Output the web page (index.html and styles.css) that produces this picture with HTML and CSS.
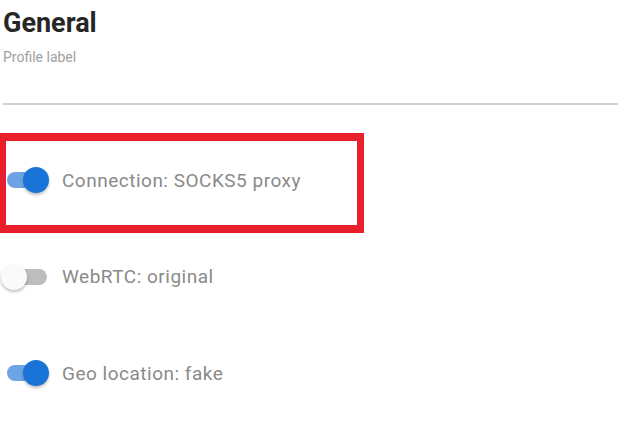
FILE: index.html
```html
<!DOCTYPE html>
<html lang="en">
<head>
  <meta charset="UTF-8" />
  <title>General</title>
  <link rel="stylesheet" href="styles.css">
</head>
<body>
  <div class="header">
    <h1>General</h1>
    <div class="field">
      <label>Profile label</label>
    </div>
  </div>

  <div class="options">
    <div class="option marked">
      <span class="switch on"><span class="track"></span><span class="thumb"></span></span>
      <span class="caption">Connection: SOCKS5 proxy</span>
    </div>
    <div class="option">
      <span class="switch"><span class="track"></span><span class="thumb"></span></span>
      <span class="caption">WebRTC: original</span>
    </div>
    <div class="option">
      <span class="switch on"><span class="track"></span><span class="thumb"></span></span>
      <span class="caption">Geo location: fake</span>
    </div>
  </div>
</body>
</html>
```

FILE: styles.css
```css
*, *::after {
  box-sizing: border-box;
}
body {
  margin: 0;
  font-family: Roboto, 'Noto Sans', sans-serif;
  background: #fff;
  overflow: hidden;
}
.header {
  padding-left: 3px;
}
h1 {
  margin: 0;
  padding-top: 7px;
  font-size: 27px;
  line-height: 32px;
  font-weight: 700;
  color: #262626;
}
.field {
  height: 66px;
  padding-top: 10px;
  border-bottom: 2px solid #d2d2d2;
}
.field label {
  display: block;
  font-size: 14px;
  line-height: 16px;
  color: #a0a0a0;
}
.options {
  margin-top: 27px;
  display: flex;
  flex-direction: column;
}
.option {
  position: relative;
  height: 96.5px;
  padding-left: 7px;
  display: flex;
  align-items: center;
  gap: 13px;
}
/* red highlight frame drawn over the first row */
.option.marked::after {
  content: "";
  position: absolute;
  top: 1px;
  left: 0;
  width: 364px;
  height: 100px;
  border-style: solid;
  border-color: #e8202b;
  border-width: 8px 7px 8px 6px;
}
.switch {
  position: relative;
  width: 42px;
  height: 26px;
  flex: none;
}
.track {
  position: absolute;
  left: 0;
  top: 5px;
  width: 40px;
  height: 16px;
  border-radius: 8px;
  background: #bdbdbd;
}
.thumb {
  position: absolute;
  top: 0;
  left: -6px;
  width: 26px;
  height: 26px;
  border-radius: 50%;
  background: #fafafa;
  box-shadow: 0 2px 3px rgba(0,0,0,0.25);
}
.switch.on .track {
  background: #6ea4e4;
}
.switch.on .thumb {
  left: 16px;
  background: #1a73d6;
}
.caption {
  font-size: 19px;
  letter-spacing: 0.5px;
  color: #8a8a8a;
}
```
